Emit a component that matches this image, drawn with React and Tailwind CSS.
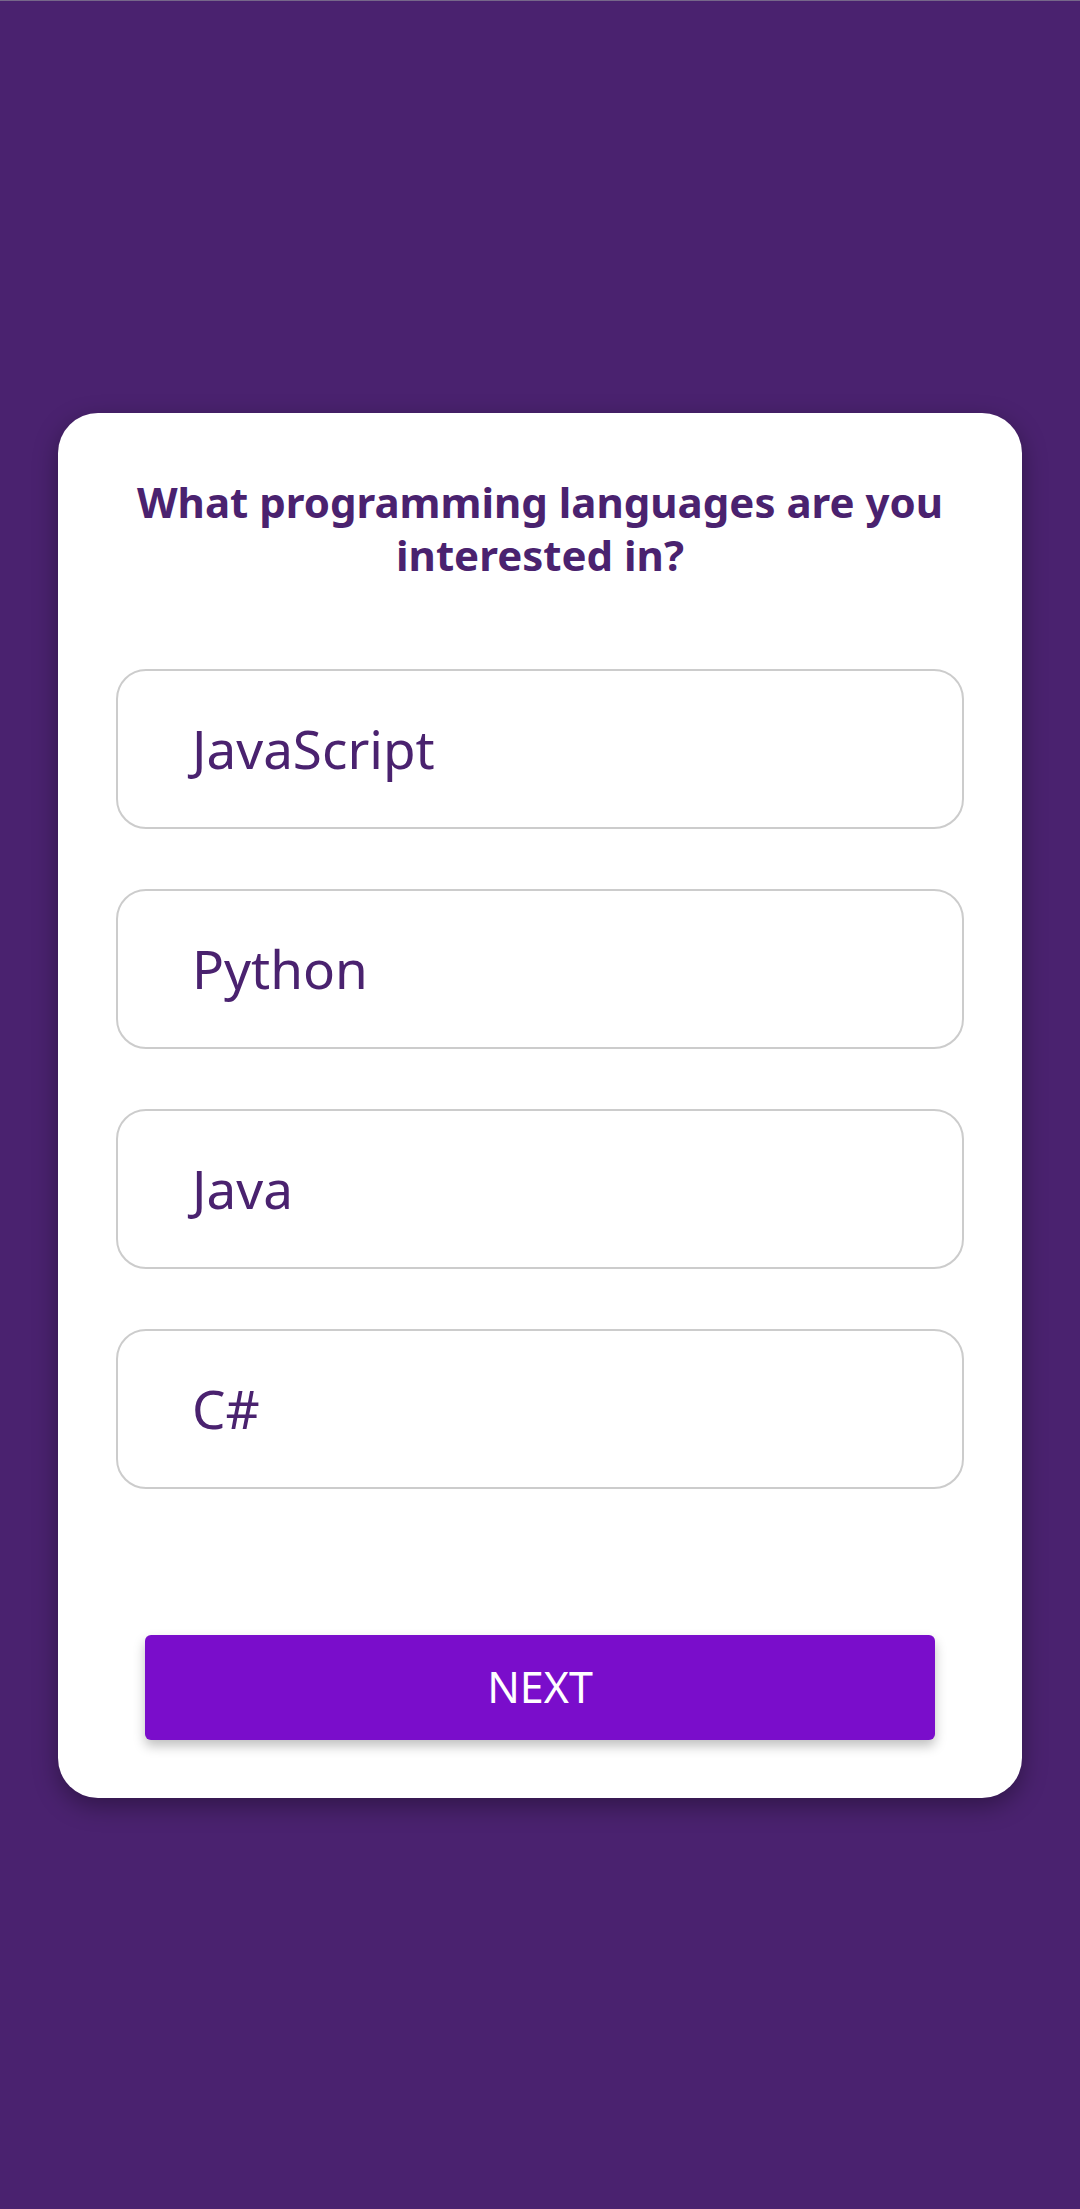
const options = ['JavaScript', 'Python', 'Java', 'C#']

export default function App() {
  return (
    <div
      className="min-h-screen w-full bg-[#4a226f] border-t border-[#76678a] flex items-center justify-center"
      style={{ fontFamily: '"Noto Sans", "Open Sans", sans-serif' }}
    >
      <div className="w-[964px] bg-white rounded-[40px] px-[58px] pt-[62px] pb-[58px] shadow-[0_8px_24px_rgba(0,0,0,0.35)]">
        <h1 className="text-center text-[42px] leading-[53px] font-bold text-[#4a226f]">
          What programming languages are you interested in?
        </h1>
        <div className="mt-[88px] flex flex-col gap-[60px]">
          {options.map(opt => (
            <button
              key={opt}
              className="h-[160px] w-full border-2 border-[#cccccc] rounded-[30px] text-left pl-[74px] text-[53px] text-[#4a226f]"
            >
              {opt}
            </button>
          ))}
        </div>
        <div className="mt-[146px] px-[29px]">
          <button className="w-full h-[105px] bg-[#7a0dcb] rounded-[6px] text-white text-[43px] shadow-[0_6px_12px_rgba(0,0,0,0.25)]">
            NEXT
          </button>
        </div>
      </div>
    </div>
  )
}
